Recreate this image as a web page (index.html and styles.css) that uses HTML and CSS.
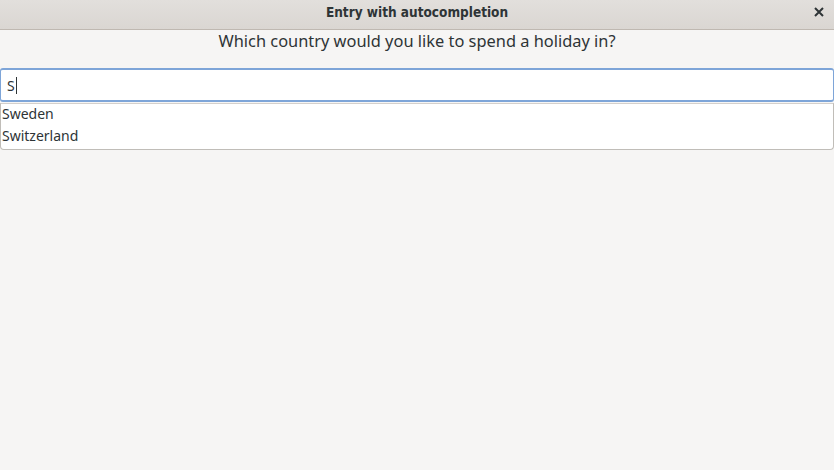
FILE: index.html
```html
<!DOCTYPE html>
<html>
<head>
<meta charset="utf-8">
<link rel="stylesheet" href="styles.css">
</head>
<body>
<div class="window">
  <header class="titlebar">
    <div class="title">Entry with autocompletion</div>
    <button class="close" aria-label="Close">
      <svg width="10" height="10" viewBox="0 0 10 10"><path d="M1 1 L9 9 M9 1 L1 9" stroke="#2e3436" stroke-width="2" stroke-linecap="butt"/></svg>
    </button>
  </header>
  <main class="content">
    <div class="question">Which country would you like to spend a holiday in?</div>
    <div class="entry"><span class="text">S</span><span class="caret"></span></div>
    <ul class="popup">
      <li>Sweden</li>
      <li>Switzerland</li>
    </ul>
  </main>
</div>
</body>
</html>
```
FILE: styles.css
```css
html, body {
  margin: 0;
  padding: 0;
  width: 834px;
  height: 470px;
  overflow: hidden;
  background: #f6f5f4;
  font-family: "DejaVu Sans", sans-serif;
  color: #2e3436;
}
.window {
  display: flex;
  flex-direction: column;
  height: 470px;
}
.titlebar {
  position: relative;
  height: 30px;
  box-sizing: border-box;
  background: linear-gradient(#e2dfdc, #dad6d2);
  border-bottom: 1px solid #bfb8b1;
  display: flex;
  align-items: center;
  justify-content: center;
}
.title {
  font-weight: bold;
  font-size: 13.5px;
  font-family: "DejaVu Sans Condensed", "DejaVu Sans", sans-serif;
  font-stretch: condensed;
  color: #2e3436;
  margin-top: -5px;
}
.close {
  position: absolute;
  right: 10px;
  top: 7px;
  width: 10px;
  height: 10px;
  padding: 0;
  border: 0;
  background: none;
  display: flex;
}
.content {
  display: flex;
  flex-direction: column;
}
.question {
  text-align: center;
  font-size: 16.4px;
  font-family: "Noto Sans", sans-serif;
  line-height: 22px;
  margin-top: 0;
  color: #2e3436;
}
.entry {
  margin-top: 16px;
  height: 34px;
  box-sizing: border-box;
  background: #ffffff;
  border: 1px solid #7ea5d8;
  border-top-width: 2px;
  border-bottom-width: 2px;
  border-radius: 3px;
  display: flex;
  align-items: center;
  padding-left: 6px;
  font-size: 14px;
  font-family: "Noto Sans", sans-serif;
}
.caret {
  width: 1px;
  height: 17px;
  background: #2e3436;
  margin-left: 1px;
}
.popup {
  list-style: none;
  margin: 1px 0 0 0;
  padding: 0 0 0 1px;
  height: 47px;
  box-sizing: border-box;
  background: #ffffff;
  border: 1px solid #c0bdb8;
  border-top-color: #d4d0cc;
  border-radius: 0 0 4px 4px;
  font-size: 14px;
  font-family: "Noto Sans", sans-serif;
  line-height: 22px;
}
.popup li {
  margin: 0;
}
.popup li:first-child {
  margin-top: -1px;
}
```
